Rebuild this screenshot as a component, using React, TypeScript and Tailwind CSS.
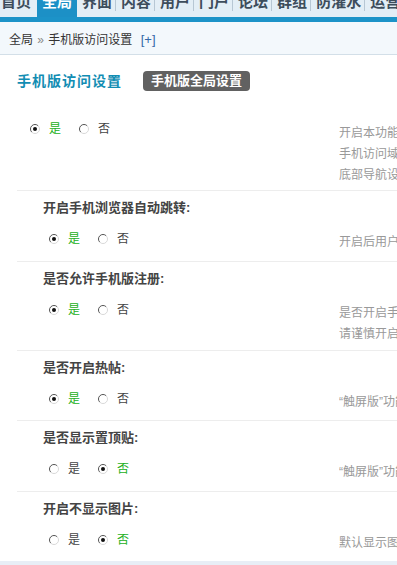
import React from "react";

const FONT = { fontFamily: "'Liberation Sans', 'Noto Sans CJK SC', sans-serif" };

function Radio({ checked }: { checked: boolean }) {
  return (
    <svg width="10" height="10" viewBox="0 0 10 10" className="shrink-0">
      <circle cx="5" cy="5" r="4.5" fill="#ffffff" />
      <path d="M8.2 1.8 A4.5 4.5 0 1 0 1.8 8.2" fill="none" stroke="#555" strokeWidth="1" />
      <path d="M1.8 8.2 A4.5 4.5 0 0 0 8.2 1.8" fill="none" stroke="#d8d8d8" strokeWidth="1" />
      {checked && <circle cx="5" cy="5" r="2" fill="#111" />}
    </svg>
  );
}

function YesNo({ yes }: { yes: boolean }) {
  return (
    <div className="flex items-center h-[20px] text-[12px] leading-[20px]">
      <Radio checked={yes} />
      <span className={`ml-[9px] ${yes ? "text-[#22b022]" : "text-[#444]"}`}>是</span>
      <span className="ml-[18px]"><Radio checked={!yes} /></span>
      <span className={`ml-[9px] ${!yes ? "text-[#22b022]" : "text-[#444]"}`}>否</span>
    </div>
  );
}

const navItems = ["界面", "内容", "用户", "门户", "论坛", "群组", "防灌水", "运营", "工具"];

const rows: { label: string; yes: boolean; desc: string[] }[] = [
  { label: "开启手机浏览器自动跳转:", yes: true, desc: ["开启后用户使用手机浏览器访问时将自动跳转"] },
  { label: "是否允许手机版注册:", yes: true, desc: ["是否开启手机版注册功能，开启后用户可通过手机注册", "请谨慎开启此功能"] },
  { label: "是否开启热帖:", yes: true, desc: ["“触屏版”功能，开启后显示热帖"] },
  { label: "是否显示置顶贴:", yes: false, desc: ["“触屏版”功能，开启后显示置顶帖"] },
  { label: "开启不显示图片:", yes: false, desc: ["默认显示图片，开启后不显示图片"] },
];

export default function App() {
  return (
    <div className="w-[397px] h-[565px] overflow-hidden bg-white relative" style={FONT}>
      {/* top nav */}
      <div className="h-[17px] bg-[#e3eef6] flex overflow-hidden whitespace-nowrap text-[15px] font-bold leading-[15px] text-[#3d4d5c]">
        <div className="pl-[1px] pr-[6px] mt-[-6px]">首页</div>
        <div className="px-[5px] bg-[#1c90c6] text-white"><div className="mt-[-6px]">全局</div></div>
        {navItems.map((n) => (
          <React.Fragment key={n}>
            <div className="pl-[5px] pr-[3px] mt-[-6px]">{n}</div>
            <div className="w-px h-[13px] bg-[#b7c7d4] mt-[-2px] shrink-0" />
          </React.Fragment>
        ))}
      </div>
      <div className="h-[5px] bg-[#1c93c8]" />
      {/* breadcrumb */}
      <div className="h-[33px] bg-[#f3f8fc] border-b border-[#d3dfe8] pl-[9px] pt-[8px] text-[12px] leading-[20px] text-[#333] whitespace-nowrap">
        全局 <span className="text-[#888] mx-[1px]">»</span> 手机版访问设置 <span className="ml-[5px] text-[13px] text-[#3568a8]">[+]</span>
      </div>
      {/* title */}
      <div className="pl-[17px] pt-[16px] pb-[19px] flex items-center gap-[21px] h-[55px]">
        <div className="text-[14px] font-bold text-[#128db3] tracking-[1px] leading-[20px] whitespace-nowrap">手机版访问设置</div>
        <div className="h-[20px] px-[8px] rounded-[4px] bg-[#616161] text-white text-[13px] font-bold leading-[20px] whitespace-nowrap">手机版全局设置</div>
      </div>
      {/* settings */}
      <div className="ml-[17px]">
        <div className="flex">
          <div className="w-[322px] shrink-0 pl-[13px] pt-[9px]">
            <YesNo yes={true} />
          </div>
          <div className="pt-[13px] pb-[4px] text-[12px] leading-[21px] text-[#999] whitespace-nowrap overflow-hidden">
            <div>开启本功能后，用户使用手机访问时将自动跳转</div>
            <div>手机访问域名，可在此处进行设置</div>
            <div>底部导航设置，请在导航设置中修改</div>
          </div>
        </div>
        {rows.map((r) => (
          <div key={r.label} className="border-t border-[#ededed]">
            <div className="h-[28px] pl-[26px] pt-[7px] text-[13px] font-bold leading-[20px] text-[#444] whitespace-nowrap">{r.label}</div>
            <div className="flex">
              <div className="w-[322px] shrink-0 pl-[32px] pt-[10px] pb-[11.5px]">
                <YesNo yes={r.yes} />
              </div>
              <div className="pt-[13px] pb-[5px] text-[12px] leading-[21px] text-[#999] whitespace-nowrap overflow-hidden">
                {r.desc.map((d) => (
                  <div key={d}>{d}</div>
                ))}
              </div>
            </div>
          </div>
        ))}
      </div>
      <div className="h-[20px] bg-[#e8eef6]" />
    </div>
  );
}
